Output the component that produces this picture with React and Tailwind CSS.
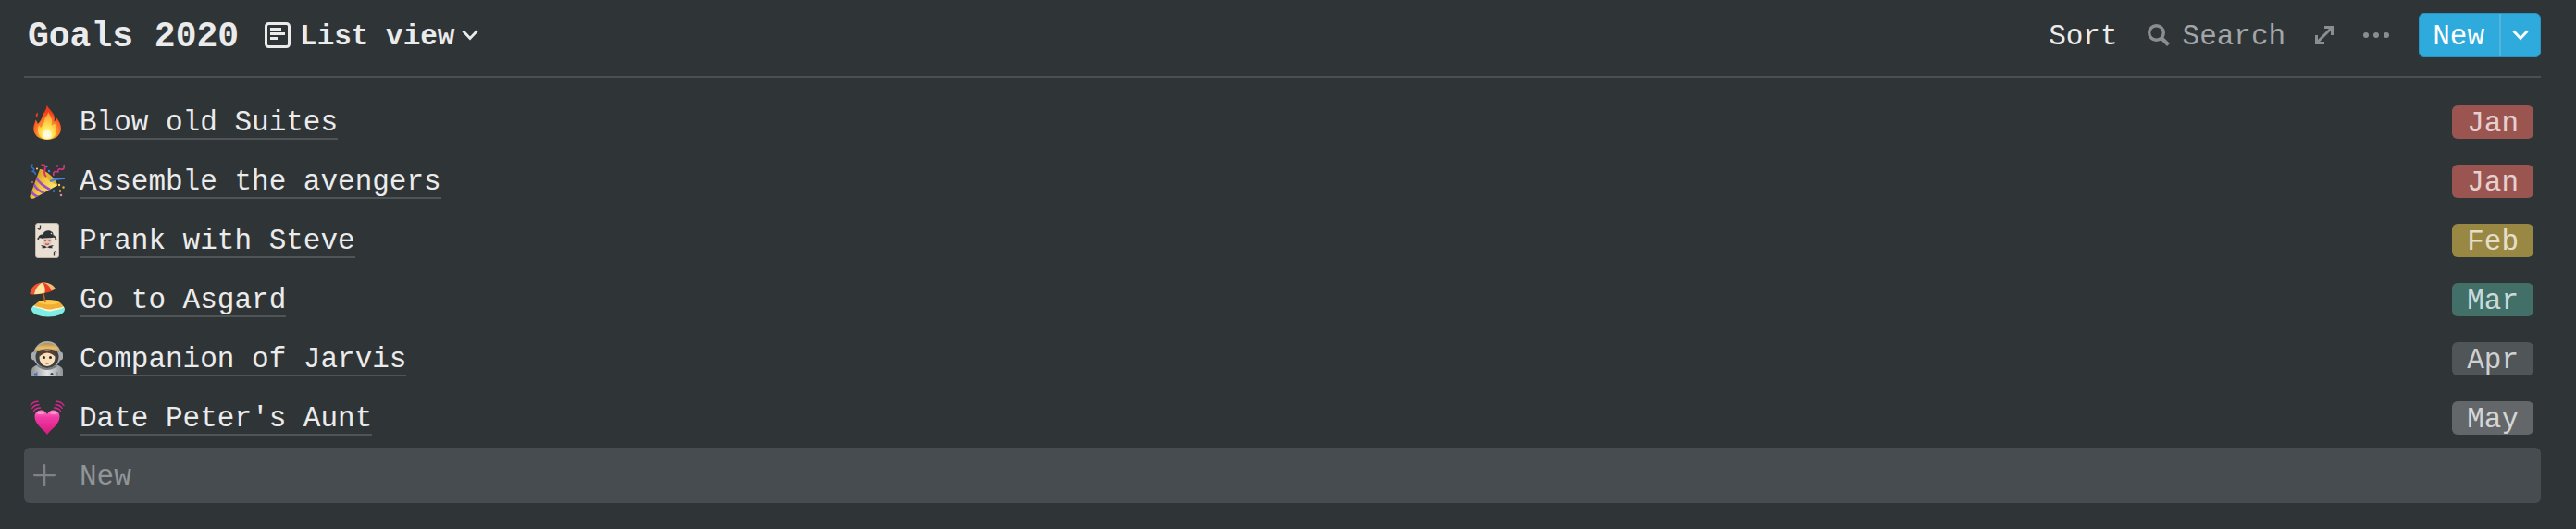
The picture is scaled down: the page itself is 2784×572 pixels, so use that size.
const goals = [
  { icon: FireIcon, title: 'Blow old Suites', month: 'Jan', tag: 'bg-[#9b5551] text-[#e6d0cf]' },
  { icon: PartyIcon, title: 'Assemble the avengers', month: 'Jan', tag: 'bg-[#9b5551] text-[#e6d0cf]' },
  { icon: JokerIcon, title: 'Prank with Steve', month: 'Feb', tag: 'bg-[#998843] text-[#e6dec7]' },
  { icon: BeachIcon, title: 'Go to Asgard', month: 'Mar', tag: 'bg-[#427069] text-[#cbdad8]' },
  { icon: AstronautIcon, title: 'Companion of Jarvis', month: 'Apr', tag: 'bg-[#505558] text-[#cfd0d0]' },
  { icon: HeartIcon, title: "Date Peter's Aunt", month: 'May', tag: 'bg-[#646769] text-[#d4d5d5]' },
]

function FireIcon() {
  return (
    <svg viewBox="0 0 38 38" className="size-[38px]" aria-hidden="true">
      <defs>
        <radialGradient id="fireOuter" cx="0.5" cy="0.85" r="0.85">
          <stop offset="0.2" stopColor="#ffb02e" />
          <stop offset="0.5" stopColor="#fc7a25" />
          <stop offset="0.75" stopColor="#f23a1c" />
        </radialGradient>
        <radialGradient id="fireInner" cx="0.5" cy="0.85" r="0.8">
          <stop offset="0" stopColor="#fffbe0" />
          <stop offset="0.35" stopColor="#ffe95a" />
          <stop offset="1" stopColor="#ff9a2c" />
        </radialGradient>
      </defs>
      <path
        d="M18.5 0c1 4.500 6.500 7 8 12 .8 2.600.3 5 0 6.500 1.500-.8 2.300-2.500 2.200-4.500 2.800 3 5.300 7.300 5.300 12 0 7-6.500 12-15 12S4.200 33 4.200 26c0-4 1.800-6.500 2.200-9.500 1.200 1 2.100 2.600 2.400 4.500 3-2.500 4.200-6 5.500-9.500C15.500 8 19 5 18.500 0Z"
        fill="url(#fireOuter)"
      />
      <path d="M9 8.500c.5 2-1.200 3.500-.2 6-2-.8-2.800-3.200-1.300-4.700Z" fill="#f23a1c" />
      <path
        d="M20 8c3 5 5 7.500 3.500 13.500-.2 1.200 1.800 1 3.500-1 1 2 2.500 4.500 2 8.500-.6 5.500-5 8.500-10 8.500S9.500 34.500 9 29c-.3-3 .5-5 1-6.500 1 .7 1.700 1.700 2 2.700 3-2.700 4-7.200 4.500-10C17.200 13.500 20 11.500 20 8Z"
        fill="url(#fireInner)"
      />
      <ellipse cx="19" cy="32.500" rx="5" ry="4.500" fill="#fffdf0" opacity="0.7" />
    </svg>
  )
}

function PartyIcon() {
  return (
    <svg viewBox="0 0 38 38" className="size-[38px]" fill="none" aria-hidden="true">
      <defs>
        <linearGradient id="cone" x1="0" y1="0.3" x2="0.8" y2="0.8">
          <stop offset="0" stopColor="#c98d1c" />
          <stop offset="0.5" stopColor="#f2c63c" />
          <stop offset="1" stopColor="#ffe76a" />
        </linearGradient>
        <clipPath id="coneClip">
          <path d="M11 6 30 24 4 38Q0 38 0 35Z" />
        </clipPath>
      </defs>
      <path d="M11 6C17 7 29 18 30 23.500L4.500 37.500C1.500 38.500 0 37 .5 34.500Z" fill="url(#cone)" />
      <g clipPath="url(#coneClip)" stroke="#9b4fc9" strokeWidth="2.600">
        <path d="M7 15Q11 22 22 28" />
        <path d="M4.500 22Q7 28 16 32" />
        <path d="M2 30Q4 34 10 36" />
      </g>
      <path d="M11 6C18 7 29 17 30 23.500 24 21 14 13 11 6Z" fill="#e3b030" />
      <path d="M12.500 1.500Q18 0 16.500 6T18 14" stroke="#dc2f6e" strokeWidth="2" />
      <path d="M22 19Q29 15.500 38 16" stroke="#4485e8" strokeWidth="2" />
      <path d="M3.500 1Q-1 2.500 3 4.500T2.500 8.500Q6 8 6.500 12" stroke="#3a6fd0" strokeWidth="1.500" />
      <path d="M26 13Q25 8.500 28 8.500T31 9.500Q30 5 34 6T37 1" stroke="#cf3a82" strokeWidth="1.600" />
      <circle cx="18.500" cy="3" r="1.200" fill="#4485e8" />
      <circle cx="8" cy="5.500" r="1.100" fill="#ffd54a" />
      <circle cx="21" cy="8" r="1.200" fill="#4485e8" />
      <circle cx="30" cy="2.500" r="1.200" fill="#e0367e" />
      <circle cx="3" cy="20" r="1.200" fill="#c9407c" />
      <circle cx="32" cy="23" r="1.200" fill="#ffd54a" />
      <circle cx="36.500" cy="25.500" r="1.200" fill="#e8a838" />
      <circle cx="26" cy="29.500" r="1.200" fill="#4485e8" />
      <circle cx="33" cy="29.500" r="1.200" fill="#ffd54a" />
      <circle cx="34" cy="34" r="1.300" fill="#e87ba8" />
    </svg>
  )
}

function JokerIcon() {
  return (
    <svg viewBox="0 0 38 38" className="size-[38px]" fill="none" aria-hidden="true">
      <rect x="6.500" y="0.500" width="25" height="37" rx="2.500" fill="#e9dfd3" stroke="#bfb5a9" />
      <path d="M11.500 2.500v3.300q0 1.200-1.200 1.200T9 5.800" stroke="#33373a" strokeWidth="1.300" />
      <path d="M26.500 35.500v-3.300q0-1.200 1.200-1.200T29 32.200" stroke="#33373a" strokeWidth="1.300" />
      <path
        d="M9 17c.5-3 2.500-5 5-4.500C15.500 9 19 7.500 22 8.500c2.500.7 4 2.700 3.500 4.800 2 .2 3 2 3 4.200-1.500-1.800-2.500-2-4-1.500L14 17c-2-1-3.500-1-5 0Z"
        fill="#2d3236"
      />
      <circle cx="9.300" cy="17" r="1" fill="#2d3236" />
      <circle cx="28.300" cy="17.500" r="1" fill="#2d3236" />
      <circle cx="23.500" cy="11.500" r="0.800" fill="#e9dfd3" />
      <path d="M14.500 16.500h9v5.500l-4.500 4-4.500-4Z" fill="#e2c3b6" />
      <path d="M16 19h2M20.500 19h2" stroke="#33373a" />
      <path d="M17 22.500q2 1.600 4 0" stroke="#d8433c" strokeWidth="1.300" />
      <path d="m12 24 4.500.8 2.500 1.600 2.500-1.600 4.500-.8-2 2 1 1.300-3.500 0-2.500-1-2.500 1-3.500 0 1-1.300Z" fill="#2d3236" />
    </svg>
  )
}

function BeachIcon() {
  return (
    <svg viewBox="0 0 38 38" className="size-[38px]" aria-hidden="true">
      <ellipse cx="20" cy="29.500" rx="18" ry="8" fill="#7eeee4" />
      <path d="M4 27c1.500-3.500 8-7 17-7 8 0 14.500 4 16 7.500-3 2.500-8 2-12 3.500-7 2-10-2.500-21-4Z" fill="#fff3d8" />
      <path d="M5 26c2-4.500 8.500-7 16-7 8.500 0 14 3.500 15.500 7.500-4 2-7 1-11 2.500-6.500 2-12-2-20.500-3Z" fill="#f0ae32" />
      <path d="M9 22c6-3.500 18-3.500 23 .5-6 2.500-15 2.500-23-.5Z" fill="#ffc94f" />
      <path d="m14 8 3 14" stroke="#b5651d" strokeWidth="1.500" />
      <path d="M.5 13C1 5.500 6.500.5 14.500.5c6.500 0 11 2.500 13.500 7-5 3.500-18 7-27.500 5.500Z" fill="#ea3d21" />
      <path d="M.5 13C.5 7 7 1 13.500.8 8.500 4 6 8.500 5 13.500Z" fill="#f15634" />
      <path d="M5 13.200C6 8 9 3 14 .5c2.500 3 3 7 2.500 11-4 1.300-8 1.800-11.500 1.700Z" fill="#ffe6a3" />
      <path d="M14 .5c5 1 8 4.500 9.500 8.700l4.500-1.700C26 3 20 0 14 .5Z" fill="#e9c078" />
    </svg>
  )
}

function AstronautIcon() {
  return (
    <svg viewBox="0 0 38 38" className="size-[38px]" aria-hidden="true">
      <defs>
        <linearGradient id="suit" x1="0" y1="0" x2="1" y2="0">
          <stop offset="0" stopColor="#8f9294" />
          <stop offset="0.5" stopColor="#e2e3e4" />
          <stop offset="1" stopColor="#8f9294" />
        </linearGradient>
        <linearGradient id="visor" x1="0" y1="0" x2="0" y2="1">
          <stop offset="0" stopColor="#b98a3e" />
          <stop offset="0.5" stopColor="#e6c274" />
          <stop offset="1" stopColor="#b17f30" />
        </linearGradient>
      </defs>
      <path d="M2 38V32c0-4 4-6 9-7h16c5 1 9 3 9 7v6Z" fill="url(#suit)" />
      <path d="M8 38v-5M30 38v-5" stroke="#777a7c" />
      <rect x="2" y="11.500" width="6" height="9" rx="3" fill="#a9acae" />
      <rect x="30" y="11.500" width="6" height="9" rx="3" fill="#a9acae" />
      <ellipse cx="19" cy="15" rx="15" ry="15" fill="#a9acae" />
      <ellipse cx="19" cy="17" rx="12.500" ry="12" fill="#3d4043" />
      <ellipse cx="19" cy="18" rx="8.500" ry="9" fill="#f7dfb9" />
      <path d="M10.500 17c0-5 3.500-7.500 8.500-7.500s8.500 2.500 8.500 7.500c-2-2.500-4.500-4-8.500-4.500-4 .5-6.500 2-8.500 4.500Z" fill="#5a3b30" />
      <path d="M5.500 12.500C6.500 6 12 2 19 2s12.500 4 13.500 10.500C28.500 9.800 24.500 8.500 19 8.500S9.500 9.800 5.500 12.500Z" fill="url(#visor)" />
      <circle cx="15.500" cy="17.500" r="1.500" fill="#352720" />
      <circle cx="22.500" cy="17.500" r="1.500" fill="#352720" />
      <path d="M17 23.500q2 1 4 0" stroke="#c04a4a" strokeWidth="1.300" fill="none" />
      <path d="M9 25.500q10 7 20 0l1 1.500q-11 8-22 0Z" fill="#777b7e" />
      <rect x="5" y="34.500" width="3" height="3" fill="#2f6fd1" />
      <circle cx="24" cy="35.500" r="1.500" fill="#3a3d40" />
    </svg>
  )
}

function HeartIcon() {
  return (
    <svg viewBox="0 0 38 38" className="size-[38px]" fill="none" aria-hidden="true">
      <defs>
        <linearGradient id="heart" x1="0" y1="0" x2="0" y2="1">
          <stop offset="0" stopColor="#ff7cc4" />
          <stop offset="0.3" stopColor="#f03aa5" />
          <stop offset="1" stopColor="#d61a7c" />
        </linearGradient>
      </defs>
      <path
        d="M19 37C15 31 5.500 26 5.500 17.500c0-4 3-7 6.700-7 3 0 5.500 1.500 6.800 4.500 1.300-3 3.800-4.500 6.800-4.500 3.700 0 6.700 3 6.700 7C32.500 26 23 31 19 37Z"
        fill="url(#heart)"
      />
      <ellipse cx="12" cy="13.500" rx="3.800" ry="1.600" fill="#ffb3dd" opacity="0.6" />
      <ellipse cx="26" cy="13.500" rx="3.800" ry="1.600" fill="#ffb3dd" opacity="0.6" />
      <g stroke="#d9268e" strokeWidth="1.400" strokeLinecap="round">
        <path d="M4.500 11.500q2-3.300 7-3.500M2.800 8.500Q5 4.800 10 4.700M1 5.500Q3.500 1.500 9 1.300" />
        <path d="M33.500 11.500q-2-3.300-7-3.500M35.200 8.500Q33 4.800 28 4.700M37 5.500Q34.500 1.500 29 1.300" />
      </g>
    </svg>
  )
}

function ListIcon() {
  return (
    <svg viewBox="0 0 28 28" className="size-7" fill="none" stroke="currentColor" aria-hidden="true">
      <rect x="1.500" y="1.500" width="25" height="25" rx="3" strokeWidth="3" />
      <path d="M6 7.500h12M6 12.500h16M6 17.500h8" strokeWidth="3" />
    </svg>
  )
}

function ChevronIcon() {
  return (
    <svg viewBox="0 0 18 12" className="h-3 w-[18px]" fill="none" stroke="currentColor" strokeWidth="2.800" aria-hidden="true">
      <path d="m1.500 1.500 7.500 8 7.500-8" />
    </svg>
  )
}

function SearchIcon() {
  return (
    <svg viewBox="0 0 24 24" className="size-6" fill="none" stroke="#8b8e90" aria-hidden="true">
      <circle cx="9.500" cy="9.500" r="7.800" strokeWidth="3.400" />
      <path d="m15 15 7.500 7.500" strokeWidth="4" />
    </svg>
  )
}

function ExpandIcon() {
  return (
    <svg viewBox="0 0 20 20" className="size-5" fill="none" stroke="#8b8e90" strokeWidth="3" aria-hidden="true">
      <path d="M10 1.500h8.500V10M10 18.500H1.500V10M2 18 18 2" />
    </svg>
  )
}

function DotsIcon() {
  return (
    <svg viewBox="0 0 28 6" className="h-1.5 w-7" fill="#8b8e90" aria-hidden="true">
      <circle cx="3" cy="3" r="3" />
      <circle cx="14" cy="3" r="3" />
      <circle cx="25" cy="3" r="3" />
    </svg>
  )
}

function PlusIcon() {
  return (
    <svg viewBox="0 0 24 24" className="size-6" stroke="#7f8385" strokeWidth="2.500" strokeLinecap="round" aria-hidden="true">
      <path d="M12 1.300v21.400M1.300 12h21.400" />
    </svg>
  )
}

function Header() {
  return (
    <header className="flex h-[84px] items-center justify-between border-b-2 border-[#4b4f52] pb-1.5">
      <div className="flex items-center pl-1">
        <h1 className="pt-1 text-[38px] leading-[44px] font-bold">Goals 2020</h1>
        <button type="button" className="ml-7 flex items-center font-bold">
          <ListIcon />
          <span className="ml-2.5 pt-1">List view</span>
          <span className="ml-2">
            <ChevronIcon />
          </span>
        </button>
      </div>
      <div className="flex items-center gap-8">
        <button type="button" className="pt-1">Sort</button>
        <button type="button" className="flex items-center gap-3.5 text-[#a3a5a6]">
          <SearchIcon />
          <span className="pt-1">Search</span>
        </button>
        <button type="button" aria-label="Open as full page">
          <ExpandIcon />
        </button>
        <button type="button" aria-label="More options">
          <DotsIcon />
        </button>
        <div className="flex h-12 overflow-hidden rounded-md border border-[#2b95c1] bg-[#2eaadc] text-white">
          <button type="button" className="pt-1 pr-4 pl-3.5">New</button>
          <button type="button" aria-label="New from template" className="border-l-2 border-[#52b5de] px-3">
            <ChevronIcon />
          </button>
        </div>
      </div>
    </header>
  )
}

function GoalRow({ goal }) {
  const Icon = goal.icon

  return (
    <li className="flex h-16 items-center justify-between pr-2 pl-1.5">
      <div className="flex items-center gap-4">
        <Icon />
        <a href="#" className="border-b-2 border-[#505457] pt-1 leading-8">
          {goal.title}
        </a>
      </div>
      <span className={`rounded-md px-4 pt-1 leading-8 ${goal.tag}`}>{goal.month}</span>
    </li>
  )
}

function App() {
  return (
    <main className="min-h-screen bg-[#2f3437] pr-[38px] pb-7 pl-[26px] font-['Liberation_Mono',monospace] text-[31px] leading-9 text-[#ebebeb]">
      <Header />
      <ul className="pt-4">
        {goals.map((goal) => (
          <GoalRow key={goal.title} goal={goal} />
        ))}
      </ul>
      <button
        type="button"
        className="flex h-[60px] w-full items-center gap-[26px] rounded-md bg-[#474c50] pl-2.5 text-[#929597]"
      >
        <PlusIcon />
        <span className="pt-1">New</span>
      </button>
    </main>
  )
}

export default App
